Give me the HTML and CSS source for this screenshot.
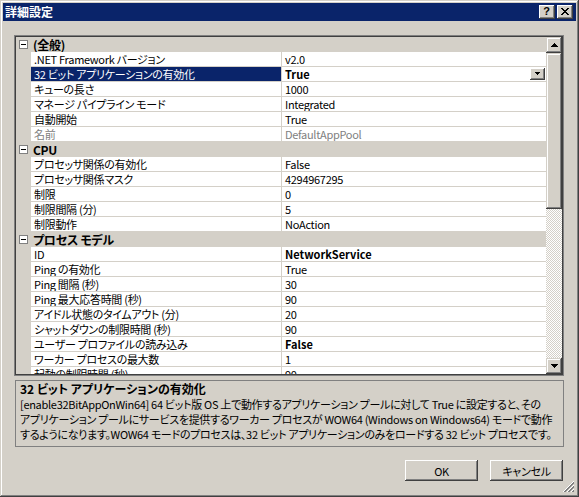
FILE: index.html
```html
<!DOCTYPE html>
<html lang="ja">
<head>
<meta charset="utf-8">
<title>詳細設定</title>
<link rel="stylesheet" href="styles.css">
</head>
<body>
<div class="window">
  <div class="titlebar">
    <span class="title">詳細設定</span>
    <div class="caption-buttons">
      <div class="cap-btn"><span class="help-glyph">?</span></div>
      <div class="cap-btn">
        <svg width="8" height="7" viewBox="0 0 8 7" shape-rendering="crispEdges"><path d="M0 0h2v1h-2zM6 0h2v1h-2zM1 1h2v1h-2zM5 1h2v1h-2zM2 2h4v1h-4zM3 3h2v1h-2zM2 4h4v1h-4zM1 5h2v1h-2zM5 5h2v1h-2zM0 6h2v1h-2zM6 6h2v1h-2z" fill="#000"/></svg>
      </div>
    </div>
  </div>
  <div class="content">
    <div class="grid-frame">
      <div class="grid-inner">
        <div class="rows">
          <div class="cat"><span class="toggle"></span><span class="cat-name">(全般)</span></div>
          <div class="row"><span class="gutter"></span><span class="name">.NET Framework バージョン</span><span class="value">v2.0</span></div>
          <div class="row selected"><span class="gutter"></span><span class="name">32 ビット アプリケーションの有効化</span><span class="value bold">True<span class="dd-btn"><svg width="5" height="3" viewBox="0 0 5 3" shape-rendering="crispEdges"><path d="M0 0h5v1h-5zM1 1h3v1h-3zM2 2h1v1h-1z" fill="#000"/></svg></span></span></div>
          <div class="row"><span class="gutter"></span><span class="name">キューの長さ</span><span class="value">1000</span></div>
          <div class="row"><span class="gutter"></span><span class="name">マネージ パイプライン モード</span><span class="value">Integrated</span></div>
          <div class="row"><span class="gutter"></span><span class="name">自動開始</span><span class="value">True</span></div>
          <div class="row disabled"><span class="gutter"></span><span class="name">名前</span><span class="value">DefaultAppPool</span></div>
          <div class="cat"><span class="toggle"></span><span class="cat-name">CPU</span></div>
          <div class="row"><span class="gutter"></span><span class="name">プロセッサ関係の有効化</span><span class="value">False</span></div>
          <div class="row"><span class="gutter"></span><span class="name">プロセッサ関係マスク</span><span class="value">4294967295</span></div>
          <div class="row"><span class="gutter"></span><span class="name">制限</span><span class="value">0</span></div>
          <div class="row"><span class="gutter"></span><span class="name">制限間隔 (分)</span><span class="value">5</span></div>
          <div class="row"><span class="gutter"></span><span class="name">制限動作</span><span class="value">NoAction</span></div>
          <div class="cat"><span class="toggle"></span><span class="cat-name">プロセス モデル</span></div>
          <div class="row"><span class="gutter"></span><span class="name">ID</span><span class="value bold">NetworkService</span></div>
          <div class="row"><span class="gutter"></span><span class="name">Ping の有効化</span><span class="value">True</span></div>
          <div class="row"><span class="gutter"></span><span class="name">Ping 間隔 (秒)</span><span class="value">30</span></div>
          <div class="row"><span class="gutter"></span><span class="name">Ping 最大応答時間 (秒)</span><span class="value">90</span></div>
          <div class="row"><span class="gutter"></span><span class="name">アイドル状態のタイムアウト (分)</span><span class="value">20</span></div>
          <div class="row"><span class="gutter"></span><span class="name">シャットダウンの制限時間 (秒)</span><span class="value">90</span></div>
          <div class="row"><span class="gutter"></span><span class="name">ユーザー プロファイルの読み込み</span><span class="value bold">False</span></div>
          <div class="row"><span class="gutter"></span><span class="name">ワーカー プロセスの最大数</span><span class="value">1</span></div>
          <div class="row"><span class="gutter"></span><span class="name">起動の制限時間 (秒)</span><span class="value">90</span></div>
        </div>
        <div class="scrollbar">
          <div class="sb-btn"><svg width="7" height="4" viewBox="0 0 7 4" shape-rendering="crispEdges"><path d="M3 0h1v1h-1zM2 1h3v1h-3zM1 2h5v1h-5zM0 3h7v1h-7z" fill="#000"/></svg></div>
          <div class="sb-thumb"></div>
          <div class="sb-track"></div>
          <div class="sb-btn"><svg width="7" height="4" viewBox="0 0 7 4" shape-rendering="crispEdges"><path d="M0 0h7v1h-7zM1 1h5v1h-5zM2 2h3v1h-3zM3 3h1v1h-1z" fill="#000"/></svg></div>
        </div>
      </div>
    </div>
    <div class="desc">
      <div class="desc-title">32 ビット アプリケーションの有効化</div>
      <div class="desc-line">[enable32BitAppOnWin64] 64 ビット版 OS 上で動作するアプリケーション プールに対して True に設定すると、その</div>
      <div class="desc-line">アプリケーション プールにサービスを提供するワーカー プロセスが WOW64 (Windows on Windows64) モードで動作</div>
      <div class="desc-line">するようになります。WOW64 モードのプロセスは、32 ビット アプリケーションのみをロードする 32 ビット プロセスです。</div>
    </div>
    <div class="buttons">
      <div class="btn">OK</div>
      <div class="btn">キャンセル</div>
    </div>
  </div>
  <svg class="grip" width="12" height="12" viewBox="0 0 12 12" shape-rendering="crispEdges">
    <path d="M11 0L0 11M11 4L4 11M11 8L8 11" stroke="#fff" stroke-width="1"/>
    <path d="M11 1L1 11M11 2L2 11M11 5L5 11M11 6L6 11M11 9L9 11M11 10L10 11" stroke="#808080" stroke-width="1"/>
  </svg>
</div>
</body>
</html>
```

FILE: styles.css
```css
* { box-sizing: border-box; }
html, body { margin: 0; padding: 0; }
body {
  width: 579px;
  height: 497px;
  overflow: hidden;
  background: #d4d0c8;
  font-family: "Noto Sans CJK JP", "Liberation Sans", sans-serif;
  font-size: 11px;
  letter-spacing: -0.3px;
  font-feature-settings: "palt";
  color: #000;
}
.window {
  position: relative;
  width: 579px;
  height: 497px;
  padding: 3px;
  background: #d4d0c8;
  box-shadow: inset -1px -1px #404040, inset 1px 1px #d4d0c8, inset -2px -2px #808080, inset 2px 2px #fff;
  display: flex;
  flex-direction: column;
}
.titlebar {
  height: 18px;
  flex: none;
  background: #0a246a;
  display: flex;
  align-items: center;
  justify-content: space-between;
  padding: 0 3px 0 2px;
}
.title {
  color: #fff;
  font-weight: bold;
  font-size: 12px;
  line-height: 18px;
  letter-spacing: 0;
}
.caption-buttons { display: flex; gap: 2px; }
.cap-btn {
  width: 16px;
  height: 14px;
  background: #d4d0c8;
  box-shadow: inset -1px -1px #404040, inset 1px 1px #fff, inset -2px -2px #808080, inset 2px 2px #d4d0c8;
  display: flex;
  align-items: center;
  justify-content: center;
  padding: 0 1px 1px 0;
}
.help-glyph {
  font-family: "Liberation Sans", sans-serif;
  font-weight: bold;
  font-size: 11px;
  line-height: 11px;
  letter-spacing: 0;
}
.content {
  flex: 1;
  display: flex;
  flex-direction: column;
  padding: 14px 12px 0 11px;
}
.grid-frame {
  width: 550px;
  height: 341px;
  border: 1px solid #808080;
  flex: none;
}
.grid-inner {
  height: 100%;
  border: 1px solid #404040;
  display: flex;
  background: #d4d0c8;
}
.rows {
  width: 530px;
  height: 100%;
  overflow: hidden;
  flex: none;
}
.cat {
  height: 15px;
  display: flex;
  align-items: center;
  background: #d4d0c8;
}
.toggle {
  position: relative;
  width: 9px;
  height: 9px;
  margin-left: 3px;
  border: 1px solid #808080;
  background: #fff;
  flex: none;
}
.toggle::after {
  content: "";
  position: absolute;
  left: 1px;
  top: 3px;
  width: 5px;
  height: 1px;
  background: #000;
}
.cat-name {
  margin-left: 5px;
  font-weight: bold;
  font-size: 12px;
  line-height: 14px;
  white-space: nowrap;
}
.row {
  height: 15px;
  display: flex;
  border-bottom: 1px solid #d4d0c8;
}
.gutter { width: 15px; flex: none; background: #d4d0c8; }
.name {
  width: 251px;
  flex: none;
  background: #fff;
  border-right: 1px solid #d4d0c8;
  padding-left: 3px;
  line-height: 14px;
  white-space: nowrap;
  overflow: hidden;
}
.value {
  position: relative;
  flex: 1;
  background: #fff;
  padding-left: 3px;
  line-height: 14px;
  white-space: nowrap;
  overflow: hidden;
}
.bold { font-weight: bold; letter-spacing: 0; }
.selected .name { background: #0a246a; color: #fff; }
.disabled .name, .disabled .value { color: #808080; }
.dd-btn {
  position: absolute;
  right: 1px;
  top: 1px;
  width: 15px;
  height: 12px;
  background: #d4d0c8;
  box-shadow: inset -1px -1px #404040, inset 1px 1px #fff, inset -2px -2px #808080;
  display: flex;
  align-items: center;
  justify-content: center;
  padding-bottom: 1px;
}
.scrollbar {
  width: 16px;
  flex: none;
  display: flex;
  flex-direction: column;
}
.sb-btn, .sb-thumb {
  background: #d4d0c8;
  box-shadow: inset -1px -1px #404040, inset 1px 1px #d4d0c8, inset -2px -2px #808080, inset 2px 2px #fff;
}
.sb-btn {
  height: 16px;
  flex: none;
  display: flex;
  align-items: center;
  justify-content: center;
}
.sb-thumb { height: 156px; flex: none; }
.sb-track {
  flex: 1;
  background-color: #fff;
  background-image: repeating-conic-gradient(#d4d0c8 0 25%, #fff 0 50%);
  background-size: 2px 2px;
}
.desc {
  margin-top: 4px;
  margin-left: 1px;
  width: 549px;
  height: 67px;
  flex: none;
  border: 1px solid #808080;
  padding: 0 0 0 4px;
  line-height: 15px;
}
.desc-title { font-weight: bold; font-size: 12px; letter-spacing: 0; margin-bottom: 1px; white-space: nowrap; }
.desc-line { white-space: nowrap; }
.buttons {
  margin-top: 13px;
  display: flex;
  justify-content: flex-end;
  gap: 12px;
  padding-right: 1px;
}
.btn {
  width: 73px;
  height: 21px;
  background: #d4d0c8;
  box-shadow: inset -1px -1px #404040, inset 1px 1px #fff, inset -2px -2px #808080, inset 2px 2px #d4d0c8;
  display: flex;
  align-items: center;
  justify-content: center;
  line-height: 14px;
}
.grip {
  position: absolute;
  right: 4px;
  bottom: 4px;
}
```
